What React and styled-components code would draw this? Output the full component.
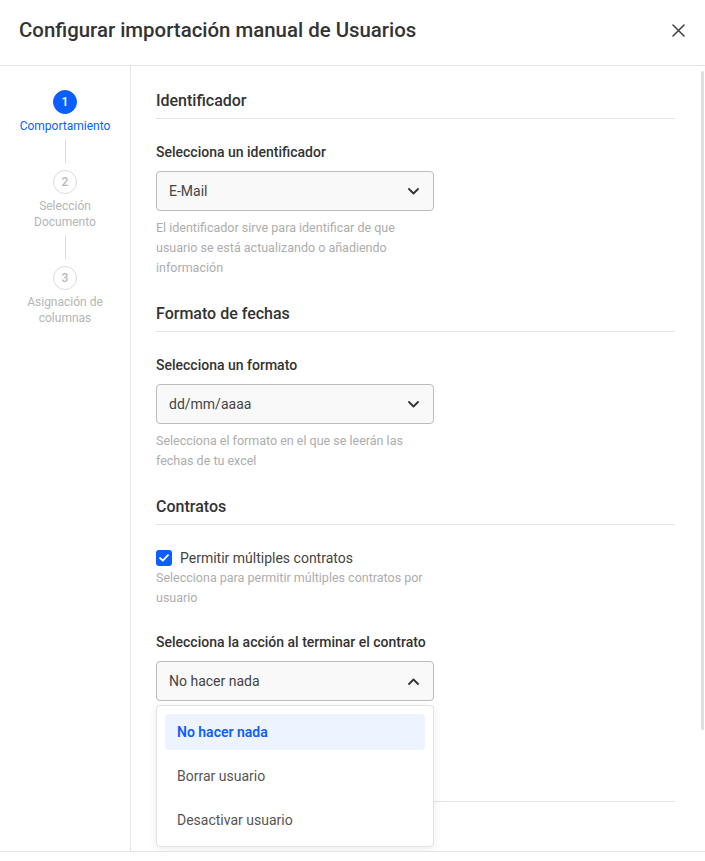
import React from "react";
import styled, { createGlobalStyle } from "styled-components";

const BLUE = "#0b5fff";

const Global = createGlobalStyle`
  html, body { margin: 0; padding: 0; overflow: hidden; background: #fff; }
  body { font-family: Roboto, "Noto Sans", "Liberation Sans", sans-serif; color: #333; }
  * { box-sizing: border-box; }
`;

const Modal = styled.div`
  height: 100vh;
  display: flex;
  flex-direction: column;
  background: #fff;
`;

const Header = styled.header`
  flex: 0 0 66px;
  display: flex;
  align-items: center;
  justify-content: space-between;
  padding: 0 19px 5px 19px;
  border-bottom: 1px solid #e3e3e3;
`;

const Title = styled.h1`
  margin: 0;
  font-size: 20.4px;
  font-weight: 500;
  color: #333;
`;

const CloseButton = styled.button`
  border: 0;
  background: none;
  padding: 0;
  width: 14px;
  height: 14px;
  display: flex;
  align-items: center;
  justify-content: center;
  cursor: pointer;
  margin-right: 1px;
`;

const Body = styled.div`
  position: relative;
  flex: 0 0 786px;
  display: flex;
  min-height: 0;
  border-bottom: 1px solid #e3e3e3;
`;

const ScrollThumb = styled.div`
  position: absolute;
  top: 5px;
  right: 1px;
  width: 3px;
  height: 659px;
  border-radius: 2px;
  background: #dedede;
`;

const Footer = styled.footer`
  flex: 1;
`;

const Sidebar = styled.nav`
  flex: 0 0 131px;
  border-right: 1px solid #e3e3e3;
  padding-top: 24px;
  display: flex;
  flex-direction: column;
  align-items: center;
`;

const Step = styled.div`
  display: flex;
  flex-direction: column;
  align-items: center;
`;

const StepCircle = styled.div`
  width: 24px;
  height: 24px;
  border-radius: 50%;
  display: flex;
  align-items: center;
  justify-content: center;
  font-size: 12px;
  font-weight: 500;
  background: ${(p) => (p.$active ? BLUE : "#fff")};
  color: ${(p) => (p.$active ? "#fff" : "#b8b8b8")};
  border: 1px solid ${(p) => (p.$active ? BLUE : "#dcdcdc")};
`;

const StepLabel = styled.div`
  margin-top: 4px;
  font-size: 12px;
  line-height: 16px;
  text-align: center;
  color: ${(p) => (p.$active ? BLUE : "#b5b5b5")};
`;

const Connector = styled.div`
  width: 1px;
  height: 24px;
  margin: 5px 0 7px;
  background: #dcdcdc;
`;

const Content = styled.main`
  flex: 1;
  position: relative;
  overflow: hidden;
  padding: 24px 30px 24px 25px;
`;

const Section = styled.section`
  & + & { margin-top: 25px; }
`;

const SectionTitle = styled.h2`
  margin: 0;
  font-size: 16px;
  line-height: 22px;
  font-weight: 500;
  color: #333;
  padding-bottom: 6px;
  border-bottom: 1px solid #e3e3e3;
`;

const Field = styled.div`
  position: relative;
  margin-top: ${(p) => p.$mt ?? 23}px;
  width: 278px;
`;

const Label = styled.div`
  font-size: 14px;
  line-height: 20px;
  font-weight: 500;
  color: #333;
  margin-bottom: 9px;
`;

const SelectBox = styled.div`
  height: 40px;
  border: 1px solid #bcbcbc;
  border-radius: 4px;
  background: #f9f9f9;
  display: flex;
  align-items: center;
  justify-content: space-between;
  padding: 0 14px 0 12px;
  font-size: 14px;
  color: #444;
`;

const Help = styled.p`
  margin: 7px 0 0;
  font-size: 12.5px;
  line-height: 20px;
  color: #adadad;
  width: 278px;
`;

const CheckRow = styled.label`
  display: flex;
  align-items: center;
  gap: 8px;
  font-size: 14px;
  line-height: 20px;
  color: #444;
  margin-top: 23px;
`;

const CheckBox = styled.span`
  width: 16px;
  height: 16px;
  border-radius: 3px;
  background: ${BLUE};
  display: flex;
  align-items: center;
  justify-content: center;
`;

const CheckHelp = styled(Help)`
  margin-top: 0;
`;

const Spacer = styled.div`
  height: 47px;
`;

const Menu = styled.ul`
  position: absolute;
  left: 0;
  right: 0;
  top: 73px;
  margin: 0;
  padding: 8px;
  list-style: none;
  background: #fff;
  border: 1px solid #e3e3e3;
  border-radius: 4px;
  box-shadow: 0 2px 8px rgba(0, 0, 0, 0.08);
  display: flex;
  flex-direction: column;
  gap: 8px;
  z-index: 2;
`;

const MenuItem = styled.li`
  height: 36px;
  display: flex;
  align-items: center;
  padding: 0 12px;
  border-radius: 4px;
  font-size: 14px;
  font-weight: ${(p) => (p.$selected ? 600 : 400)};
  color: ${(p) => (p.$selected ? BLUE : "#555")};
  background: ${(p) => (p.$selected ? "#eef4ff" : "transparent")};
`;

const Chevron = ({ up }) => (
  <svg width="11" height="7" viewBox="0 0 11 7" fill="none">
    <path
      d={up ? "M1 6L5.5 1.5L10 6" : "M1 1L5.5 5.5L10 1"}
      stroke="#333"
      strokeWidth="1.8"
      strokeLinecap="round"
      strokeLinejoin="round"
    />
  </svg>
);

const Select = ({ value, up }) => (
  <SelectBox>
    <span>{value}</span>
    <Chevron up={up} />
  </SelectBox>
);

const steps = [
  { n: 1, label: "Comportamiento", active: true },
  { n: 2, label: ["Selección", "Documento"] },
  { n: 3, label: ["Asignación de", "columnas"] },
];

export default function App() {
  return (
    <>
      <Global />
      <Modal>
        <Header>
          <Title>Configurar importación manual de Usuarios</Title>
          <CloseButton aria-label="Cerrar">
            <svg width="13" height="13" viewBox="0 0 13 13">
              <path d="M1 1L12 12M12 1L1 12" stroke="#444" strokeWidth="1.6" strokeLinecap="round" />
            </svg>
          </CloseButton>
        </Header>
        <Body>
          <Sidebar>
            {steps.map((s, i) => (
              <React.Fragment key={s.n}>
                {i > 0 && <Connector />}
                <Step>
                  <StepCircle $active={s.active}>{s.n}</StepCircle>
                  <StepLabel $active={s.active}>
                    {Array.isArray(s.label)
                      ? s.label.map((l) => <div key={l}>{l}</div>)
                      : s.label}
                  </StepLabel>
                </Step>
              </React.Fragment>
            ))}
          </Sidebar>
          <Content>
            <Section>
              <SectionTitle>Identificador</SectionTitle>
              <Field>
                <Label>Selecciona un identificador</Label>
                <Select value="E-Mail" />
              </Field>
              <Help>
                El identificador sirve para identificar de que usuario se está actualizando o
                añadiendo información
              </Help>
            </Section>
            <Section>
              <SectionTitle>Formato de fechas</SectionTitle>
              <Field>
                <Label>Selecciona un formato</Label>
                <Select value="dd/mm/aaaa" />
              </Field>
              <Help>Selecciona el formato en el que se leerán las fechas de tu excel</Help>
            </Section>
            <Section>
              <SectionTitle>Contratos</SectionTitle>
              <CheckRow>
                <CheckBox>
                  <svg width="10" height="8" viewBox="0 0 10 8" fill="none">
                    <path d="M1 4L3.8 6.6L9 1.2" stroke="#fff" strokeWidth="1.8" strokeLinecap="round" strokeLinejoin="round" />
                  </svg>
                </CheckBox>
                Permitir múltiples contratos
              </CheckRow>
              <CheckHelp>Selecciona para permitir múltiples contratos por usuario</CheckHelp>
              <Field $mt={24}>
                <Label>Selecciona la acción al terminar el contrato</Label>
                <Select value="No hacer nada" up />
                <Menu>
                  <MenuItem $selected>No hacer nada</MenuItem>
                  <MenuItem>Borrar usuario</MenuItem>
                  <MenuItem>Desactivar usuario</MenuItem>
                </Menu>
              </Field>
              <Spacer />
            </Section>
            <Section>
              <SectionTitle>Otros</SectionTitle>
            </Section>
          </Content>
          <ScrollThumb />
        </Body>
        <Footer />
      </Modal>
    </>
  );
}
